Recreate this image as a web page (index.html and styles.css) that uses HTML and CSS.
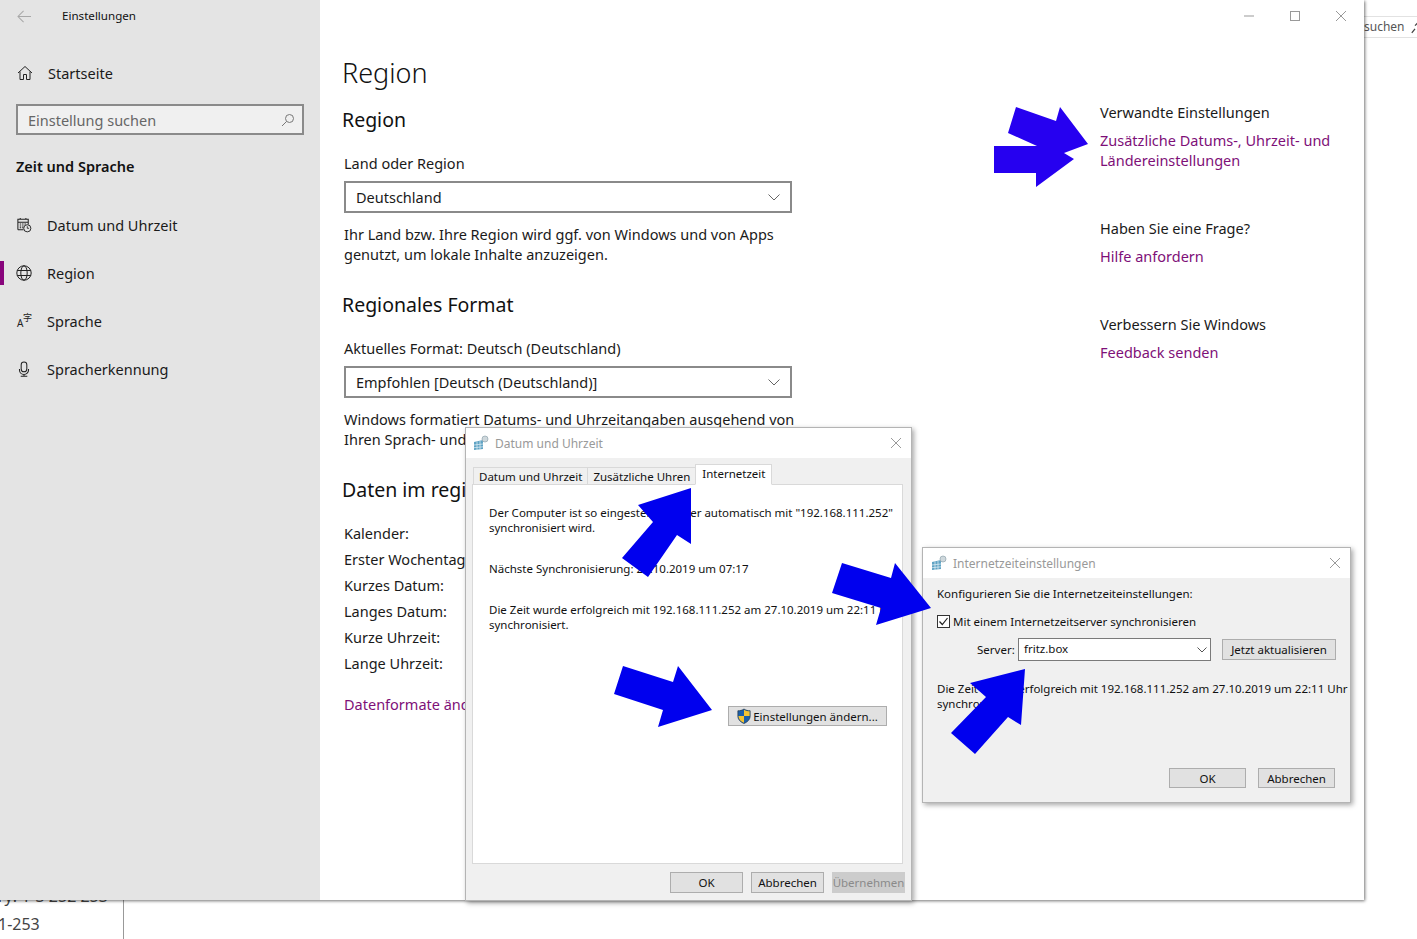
FILE: index.html
```html
<!DOCTYPE html>
<html lang="de">
<head>
<meta charset="utf-8">
<title>Einstellungen</title>
<link rel="stylesheet" href="styles.css">
</head>
<body>
<div class="desktop">
  <div class="bg-search">suchen<svg class="bg-search-icon" viewBox="0 0 10 14"><path d="M1 13 L5 8 M5 4 L8 1" fill="none" stroke="#444" stroke-width="1.6"/></svg></div>
  <div class="bg-doc">ry: 1-3 252 253<br>1-253</div>

  <div class="settings">
    <aside class="side">
      <div class="side-head">
        <svg class="back" viewBox="0 0 16 14"><path d="M1 7 H15 M7 1 L1 7 L7 13" fill="none" stroke="#a8a8a8" stroke-width="1.1"/></svg>
        <span class="side-title">Einstellungen</span>
      </div>
      <div class="home-row">
        <svg class="icon" viewBox="0 0 16 16"><path d="M1 8 L8 1.5 L15 8 M3 6.5 V14.5 H6.5 V9.5 H9.5 V14.5 H13 V6.5" fill="none" stroke="#222" stroke-width="1"/></svg>
        <span>Startseite</span>
      </div>
      <div class="search">
        <span>Einstellung suchen</span>
        <svg class="search-icon" viewBox="0 0 14 14"><circle cx="8.5" cy="5.5" r="4" fill="none" stroke="#777" stroke-width="1"/><path d="M5.5 8.5 L1 13" stroke="#777" stroke-width="1"/></svg>
      </div>
      <div class="side-group">Zeit und Sprache</div>
      <nav class="nav">
        <div class="nav-item">
          <svg class="icon" viewBox="0 0 16 17"><path d="M1.5 13.5 V2.5 H12.5 V8 M1.5 5.5 H12.5 M4 1 V3 M10 1 V3 M1.5 13.5 H7.5" fill="none" stroke="#222" stroke-width="1.1"/><path d="M3.5 7.5 H5 M6 7.5 H7.5 M8.5 7.5 H10 M3.5 9.5 H5 M6 9.5 H7.5 M3.5 11.5 H5 M6 11.5 H7.5" stroke="#222" stroke-width="1.1"/><circle cx="11.5" cy="12" r="3.8" fill="#e4e4e4" stroke="#222" stroke-width="1"/><path d="M11.5 9.8 V12 H13.4" fill="none" stroke="#222" stroke-width=".9"/></svg>
          <span>Datum und Uhrzeit</span>
        </div>
        <div class="nav-item nav-active">
          <svg class="icon" viewBox="0 0 16 16"><circle cx="8" cy="8" r="7.2" fill="none" stroke="#222" stroke-width="1"/><ellipse cx="8" cy="8" rx="3.2" ry="7.2" fill="none" stroke="#222" stroke-width="1"/><path d="M1.2 5.5 H14.8 M1.2 10.5 H14.8" stroke="#222" stroke-width="1"/></svg>
          <span>Region</span>
        </div>
        <div class="nav-item">
          <span class="lang-icon"><span class="lang-a">A</span><span class="lang-z">字</span></span>
          <span>Sprache</span>
        </div>
        <div class="nav-item">
          <svg class="icon" viewBox="0 0 16 17"><rect x="5" y="1" width="6" height="10.5" rx="3" fill="none" stroke="#222" stroke-width="1.1"/><path d="M3.2 8.5 V9.5 A4.8 4.8 0 0 0 12.8 9.5 V8.5 M8 14.5 V16 M4.5 16.3 H11.5" fill="none" stroke="#222" stroke-width="1.1"/></svg>
          <span>Spracherkennung</span>
        </div>
      </nav>
    </aside>

    <main class="main">
      <div class="controls">
        <span class="ctl"><svg viewBox="0 0 12 12"><path d="M1 6 H11" stroke="#999" stroke-width="1"/></svg></span>
        <span class="ctl"><svg viewBox="0 0 12 12"><rect x="1.5" y="1.5" width="9" height="9" fill="none" stroke="#999" stroke-width="1"/></svg></span>
        <span class="ctl"><svg viewBox="0 0 12 12"><path d="M1 1 L11 11 M11 1 L1 11" stroke="#999" stroke-width="1"/></svg></span>
      </div>
      <div class="content">
        <section class="col-left">
          <h1 class="title">Region</h1>
          <h2 class="sub sub-first">Region</h2>
          <div class="label">Land oder Region</div>
          <div class="select"><span>Deutschland</span><svg class="chev" viewBox="0 0 12 7"><path d="M.5 .5 L6 6 L11.5 .5" fill="none" stroke="#666" stroke-width="1"/></svg></div>
          <p class="desc">Ihr Land bzw. Ihre Region wird ggf. von Windows und von Apps<br>genutzt, um lokale Inhalte anzuzeigen.</p>
          <h2 class="sub">Regionales Format</h2>
          <div class="label">Aktuelles Format: Deutsch (Deutschland)</div>
          <div class="select"><span>Empfohlen [Deutsch (Deutschland)]</span><svg class="chev" viewBox="0 0 12 7"><path d="M.5 .5 L6 6 L11.5 .5" fill="none" stroke="#666" stroke-width="1"/></svg></div>
          <p class="desc">Windows formatiert Datums- und Uhrzeitangaben ausgehend von<br>Ihren Sprach- und Regionaleinstellungen.</p>
          <h2 class="sub">Daten im regionalen Format</h2>
          <ul class="data">
            <li>Kalender:</li>
            <li>Erster Wochentag:</li>
            <li>Kurzes Datum:</li>
            <li>Langes Datum:</li>
            <li>Kurze Uhrzeit:</li>
            <li>Lange Uhrzeit:</li>
          </ul>
          <div class="link link-change">Datenformate ändern</div>
        </section>
        <section class="col-right">
          <div class="rel">Verwandte Einstellungen</div>
          <div class="link rel-link">Zusätzliche Datums-, Uhrzeit- und<br>Ländereinstellungen</div>
          <div class="rel rel-next">Haben Sie eine Frage?</div>
          <div class="link rel-link">Hilfe anfordern</div>
          <div class="rel rel-next">Verbessern Sie Windows</div>
          <div class="link rel-link">Feedback senden</div>
        </section>
      </div>
    </main>
  </div>

  <div class="dialog dialog-date">
    <div class="dlg-title">
      <svg class="dlg-icon" viewBox="0 0 16 16"><path d="M1 7 L10 5 V14 L1 15 Z" fill="#5fa3c4"/><path d="M4 6.5 V15 M7 6 V14.5 M1 10 L10 9 M1 12.7 L10 11.8" stroke="#e6f1f6" stroke-width=".7"/><circle cx="12" cy="4" r="3" fill="#cfd8dc" stroke="#8fa3ad" stroke-width=".7"/></svg>
      <span>Datum und Uhrzeit</span>
      <svg class="dlg-x" viewBox="0 0 12 12"><path d="M1 1 L11 11 M11 1 L1 11" stroke="#9a9a9a" stroke-width="1"/></svg>
    </div>
    <div class="dlg-body">
      <div class="tabs">
        <span class="tab">Datum und Uhrzeit</span>
        <span class="tab tab-2">Zusätzliche Uhren</span>
        <span class="tab tab-on">Internetzeit</span>
      </div>
      <div class="panel">
        <p class="dlg-text">Der Computer ist so eingestellt, dass er automatisch mit "192.168.111.252"<br>synchronisiert wird.</p>
        <p class="dlg-text dlg-gap">Nächste Synchronisierung: 28.10.2019 um 07:17</p>
        <p class="dlg-text dlg-gap">Die Zeit wurde erfolgreich mit 192.168.111.252 am 27.10.2019 um 22:11 Uhr<br>synchronisiert.</p>
        <div class="btn btn-change">
          <svg class="shield" viewBox="0 0 16 18"><path d="M8 1 C10 2.5 12.5 3 15 3 V9 C15 13 12 16 8 17.5 C4 16 1 13 1 9 V3 C3.5 3 6 2.5 8 1 Z" fill="#1c5fa8" stroke="#234" stroke-width=".8"/><path d="M8 1.8 C10 3 12.5 3.5 14.4 3.6 V9 H8 Z" fill="#f5c430"/><path d="M8 9 H1.6 C1.8 12.5 4.5 15.5 8 16.8 Z" fill="#f5c430"/></svg>
          <span>Einstellungen ändern...</span>
        </div>
      </div>
      <div class="dlg-foot">
        <span class="btn btn-foot">OK</span>
        <span class="btn btn-foot">Abbrechen</span>
        <span class="btn btn-foot btn-off">Übernehmen</span>
      </div>
    </div>
  </div>

  <div class="dialog dialog-net">
    <div class="dlg-title dlg-title-net">
      <svg class="dlg-icon" viewBox="0 0 16 16"><path d="M1 7 L10 5 V14 L1 15 Z" fill="#5fa3c4"/><path d="M4 6.5 V15 M7 6 V14.5 M1 10 L10 9 M1 12.7 L10 11.8" stroke="#e6f1f6" stroke-width=".7"/><circle cx="12" cy="4" r="3" fill="#cfd8dc" stroke="#8fa3ad" stroke-width=".7"/></svg>
      <span>Internetzeiteinstellungen</span>
      <svg class="dlg-x" viewBox="0 0 12 12"><path d="M1 1 L11 11 M11 1 L1 11" stroke="#9a9a9a" stroke-width="1"/></svg>
    </div>
    <div class="net-body">
      <p class="dlg-text">Konfigurieren Sie die Internetzeiteinstellungen:</p>
      <div class="check-row">
        <svg class="check" viewBox="0 0 13 13"><rect x=".5" y=".5" width="12" height="12" fill="#fff" stroke="#333"/><path d="M2.5 6.5 L5.3 9.5 L10.5 3" fill="none" stroke="#222" stroke-width="1.2"/></svg>
        <span>Mit einem Internetzeitserver synchronisieren</span>
      </div>
      <div class="server-row">
        <span class="server-label">Server:</span>
        <div class="combo"><span>fritz.box</span><svg class="combo-chev" viewBox="0 0 10 6"><path d="M.5 .5 L5 5 L9.5 .5" fill="none" stroke="#555" stroke-width="1"/></svg></div>
        <span class="btn btn-update">Jetzt aktualisieren</span>
      </div>
      <p class="dlg-text net-result">Die Zeit wurde erfolgreich mit 192.168.111.252 am 27.10.2019 um 22:11 Uhr<br>synchronisiert.</p>
      <div class="net-foot">
        <span class="btn btn-net">OK</span>
        <span class="btn btn-net">Abbrechen</span>
      </div>
    </div>
  </div>

  <svg class="arrows" viewBox="0 0 1417 939">
    <polygon class="arrow-violet" points="1016,107 1056,121 1060,107 1088,144 1064,153 1074,159 1036,187 1036,173 994,173 994,146 1037,146 1008,133"/>
    <polygon class="arrow" points="638,505 691,488 691,544 677,535 648,577 622,558 653,522"/>
    <polygon class="arrow" points="623,666 673,682 678,666 712,710 658,727 663,710 614,694"/>
    <polygon class="arrow" points="842,563 891,578 895,563 931,608 876,625 881,608 832,593"/>
    <polygon class="arrow" points="1025,669 970,683 986,697 951,733 975,754 1008,717 1021,725"/>
  </svg>
</div>
</body>
</html>
```

FILE: styles.css
```css
* { box-sizing: border-box; }
html, body { margin: 0; padding: 0; }
body {
  background: #fff;
  color: #1a1a1a;
  font-family: "Noto Sans", "Open Sans", "Liberation Sans", sans-serif;
  font-size: 14.5px;
  line-height: 20px;
}
.desktop { position: relative; width: 1417px; height: 939px; overflow: hidden; background: #fff; }

.bg-search {
  position: absolute; left: 1364px; top: 16px; width: 53px; height: 22px;
  border-top: 1px solid #e2e2e2; border-bottom: 1px solid #e2e2e2;
  font-size: 12px; color: #555; line-height: 20px;
}
.bg-search-icon { position: absolute; left: 47px; top: 5px; width: 8px; height: 12px; }
.bg-doc {
  position: absolute; left: -2px; top: 882px; width: 126px; height: 57px;
  border-right: 1px solid #999; font-size: 16px; line-height: 28px; color: #444; white-space: nowrap; overflow: hidden;
}

.settings {
  position: absolute; left: 0; top: 0; width: 1364px; height: 900px;
  display: flex; background: #fff;
  box-shadow: 1px 1px 3px rgba(0,0,0,.55);
}
.side { width: 320px; flex: none; background: #e4e4e4; }
.side-head { height: 32px; display: flex; align-items: center; padding-left: 17px; }
.back { width: 15px; height: 13px; }
.side-title { margin-left: 30px; font-size: 11.6px; color: #111; }
.icon { width: 16px; height: 16px; flex: none; }
.home-row { margin-top: 17px; height: 48px; display: flex; align-items: center; padding-left: 17px; gap: 15px; }
.search {
  margin: 7px 0 0 16px; width: 288px; height: 31px;
  border: 2px solid #8a8a8a; background: #f0f0f0;
  display: flex; align-items: center; justify-content: space-between;
  padding: 0 7px 0 10px; color: #666;
}
.search-icon { width: 14px; height: 14px; }
.side-group { margin: 21px 0 0 16px; font-weight: 600; color: #111; }
.nav { margin-top: 25px; }
.nav-item { position: relative; height: 48px; display: flex; align-items: center; padding-left: 16px; gap: 15px; }
.nav-active::before { content: ""; position: absolute; left: 0; top: 12px; width: 4px; height: 24px; background: #88057c; }
.lang-icon { position: relative; width: 16px; height: 16px; flex: none; color: #222; }
.lang-a { position: absolute; left: 1px; top: 4px; font-size: 10px; line-height: 12px; }
.lang-z { position: absolute; left: 7px; top: 0; font-family: "Noto Sans CJK SC", sans-serif; font-size: 9px; line-height: 10px; }

.main { flex: 1; display: flex; flex-direction: column; }
.controls { height: 32px; display: flex; justify-content: flex-end; padding-right: 0; }
.ctl { width: 46px; height: 32px; display: flex; align-items: center; justify-content: center; }
.ctl svg { width: 12px; height: 12px; }
.content { display: flex; padding-left: 24px; }
.col-left { width: 448px; flex: none; }
.col-right { margin-left: 308px; margin-top: 70px; }
.title { margin: 21px 0 0 -2px; font-size: 27px; line-height: 40px; font-weight: 300; color: #111; }
.sub { margin: 27px 0 0 -2px; font-size: 19.5px; line-height: 28px; font-weight: 400; color: #111; white-space: nowrap; }
.sub-first { margin-top: 13px; }
.label { margin-top: 19px; }
.select {
  margin-top: 8px; height: 32px; border: 2px solid #8a8a8a; background: #fff;
  display: flex; align-items: center; justify-content: space-between; padding: 0 10px;
}
.chev { width: 12px; height: 7px; }
.desc { margin: 11px 0 0; white-space: nowrap; }
.data { list-style: none; margin: 16px 0 0; padding: 0; line-height: 26px; }
.link { color: #7e1078; }
.link-change { margin-top: 18px; }
.rel-link { margin-top: 8px; white-space: nowrap; }
.rel { white-space: nowrap; }
.rel-next { margin-top: 48px; }

.dialog {
  position: absolute; background: #f0f0f0; border: 1px solid #b4b4b4;
  box-shadow: 2px 2px 5px rgba(0,0,0,.35);
  font-size: 11.5px; line-height: 15px; color: #111;
  display: flex; flex-direction: column;
}
.dialog-date { left: 465px; top: 427px; width: 447px; height: 474px; }
.dialog-net { left: 922px; top: 547px; width: 429px; height: 256px; }
.dlg-title {
  height: 30px; flex: none; background: #fff; display: flex; align-items: center;
  padding: 0 9px 0 7px; gap: 6px; color: #999; font-size: 12px;
}
.dlg-title-net { padding-left: 8px; }
.dlg-icon { width: 16px; height: 16px; flex: none; }
.dlg-x { width: 12px; height: 12px; margin-left: auto; }
.dlg-body { flex: 1; display: flex; flex-direction: column; padding: 7px 6px 7px; }
.tabs { display: flex; align-items: flex-end; height: 20px; margin: 0 0 -1px 1px; position: relative; z-index: 1; }
.tab { height: 18px; padding: 0 5px; line-height: 17px; border: 1px solid #d9d9d9; border-bottom: 1px solid #d9d9d9; background: #f0f0f0; white-space: nowrap; }
.tab-2 { border-left: none; border-right: none; }
.tab-on { height: 21px; background: #fff; border-bottom: 1px solid #fff; line-height: 18px; padding: 0 6px; }
.panel {
  height: 380px; margin-right: 2px; background: #fff; border: 1px solid #d9d9d9;
  padding: 20px 15px 0 16px; display: flex; flex-direction: column;
}
.dlg-text { margin: 0; white-space: nowrap; }
.dlg-gap { margin-top: 26px; }
.btn {
  display: flex; align-items: center; justify-content: center;
  background: #e1e1e1; border: 1px solid #adadad; color: #111; white-space: nowrap;
}
.btn-change { align-self: flex-end; margin-top: 74px; width: 159px; height: 20px; gap: 2px; margin-right: 0; }
.shield { width: 14px; height: 16px; flex: none; }
.dlg-foot { display: flex; justify-content: flex-end; gap: 8px; margin-top: 8px; }
.btn-foot { width: 73px; height: 21px; }
.btn-off { background: #ccc; border-color: #ccc; color: #8a8a8a; }

.net-body { flex: 1; display: flex; flex-direction: column; padding: 8px 14px 14px 14px; }
.check-row { display: flex; align-items: center; gap: 3px; margin-top: 13px; height: 15px; }
.check { width: 13px; height: 13px; flex: none; }
.server-row { display: flex; align-items: center; margin-top: 9px; height: 23px; padding-left: 40px; }
.server-label { width: 41px; }
.combo {
  width: 193px; height: 23px; background: #fff; border: 1px solid #7a7a7a;
  display: flex; align-items: center; justify-content: space-between; padding: 0 3px 2px 5px;
}
.combo-chev { width: 10px; height: 6px; margin-top: 3px; }
.btn-update { width: 114px; height: 21px; margin-left: 11px; }
.net-result { margin-top: 20px; }
.net-foot { display: flex; justify-content: flex-end; gap: 12px; margin-top: auto; padding-right: 1px; }
.btn-net { width: 77px; height: 20px; }

.arrows { position: absolute; left: 0; top: 0; width: 1417px; height: 939px; pointer-events: none; }
.arrow { fill: #0000ee; }
.arrow-violet { fill: #2600f0; }
```
